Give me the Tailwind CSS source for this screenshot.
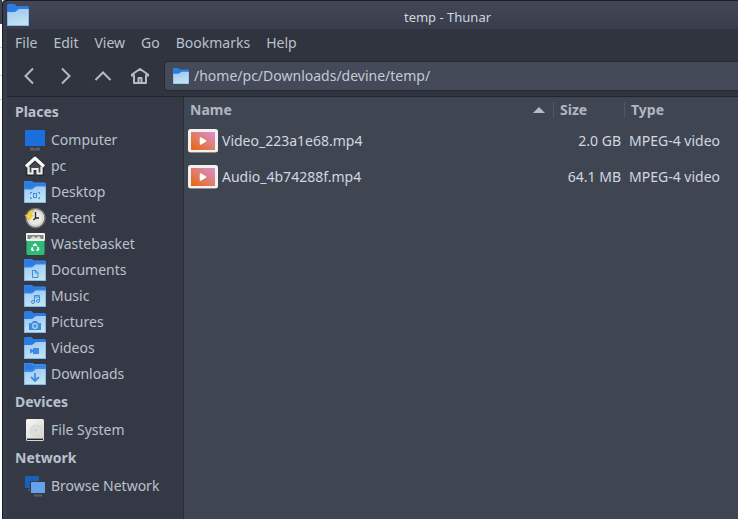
<!DOCTYPE html>
<html lang="en">
<head>
  <meta charset="UTF-8" />
  <meta name="viewport" content="width=device-width, initial-scale=1.0" />
  <title>temp - Thunar</title>
  <script src="https://cdn.jsdelivr.net/npm/@tailwindcss/browser@4"></script>
</head>
<body class="bg-white font-['Noto_Sans',sans-serif] text-sm text-[#b9c1cd] h-screen overflow-hidden flex">

  <!-- shared icons -->
  <svg class="absolute w-0 h-0" aria-hidden="true">
    <defs>
      <linearGradient id="paper" x1="0" y1="0" x2="0.3" y2="1">
        <stop offset="0" stop-color="#9cc6f5" />
        <stop offset="1" stop-color="#c2e4ee" />
      </linearGradient>
      <linearGradient id="film" x1="0" y1="1" x2="1" y2="0">
        <stop offset="0" stop-color="#ea6310" />
        <stop offset="0.45" stop-color="#e17b60" />
        <stop offset="1" stop-color="#da8edb" />
      </linearGradient>
      <linearGradient id="disk" x1="0" y1="0" x2="1" y2="1">
        <stop offset="0" stop-color="#fafafa" />
        <stop offset="1" stop-color="#d2d2ce" />
      </linearGradient>
    </defs>
    <symbol id="folder" viewBox="0 0 22 22">
      <path d="M0 1.500 Q0 0 1.500 0 H7.500 L9.500 2 H20.500 Q22 2 22 3.500 V20 H0Z" fill="#2b7ce0" />
      <path d="M0 9 Q0 8 1 8 H7 Q8.500 8 9.500 7 L11 5.500 Q11.500 5 12.500 5 H21 Q22 5 22 6 V21 Q22 22 21 22 H1 Q0 22 0 21Z" fill="url(#paper)" />
      <path d="M0.500 9 V21.500 H21.500 V6" fill="none" stroke="#86b9f0" stroke-width="1" />
    </symbol>
    <symbol id="video" viewBox="0 0 30 24">
      <rect x="0" y="0.500" width="30" height="23.500" rx="2.500" fill="#252932" />
      <rect x="0" y="0" width="30" height="23.500" rx="2.500" fill="#f4f1ee" />
      <rect x="3" y="3" width="24" height="18" fill="url(#film)" />
      <path d="M12.500 9 L17.500 12 L12.500 15Z" fill="#fff" stroke="#fff" stroke-width="1.500" stroke-linejoin="round" />
    </symbol>
  </svg>

  <!-- edge of the window behind -->
  <div class="w-0.5 shrink-0 flex flex-col bg-white">
    <div class="h-6 bg-[#3d4350]"></div>
    <div class="h-6 border-b border-[#d0d0d0]"></div>
    <div class="h-7 border-b border-[#d0d0d0]"></div>
    <div class="h-6 border-b border-[#d0d0d0]"></div>
  </div>

  <div class="flex-1 min-w-0 flex flex-col bg-[#393d4b] border-l border-t border-[#1c1e26] rounded-tl pl-1">
    <header class="h-7 shrink-0 flex items-center bg-linear-to-b from-[#434756] to-[#393d4b]">
      <svg class="size-[22px]"><use href="#folder" /></svg>
      <h1 class="flex-1 text-center pt-1 pl-32 text-[13px] text-[#cfd6e0]">temp - Thunar</h1>
    </header>

    <nav class="h-7 shrink-0 flex items-center gap-4 px-2 bg-[#2f343f]">
      <button>File</button>
      <button>Edit</button>
      <button>View</button>
      <button>Go</button>
      <button>Bookmarks</button>
      <button>Help</button>
    </nav>

    <div class="h-10 shrink-0 flex items-center pl-[3px] pb-0.5 bg-[#2f343f] border-b border-[#22252e]">
      <div class="flex text-[#b3bbc7]">
        <button aria-label="Back" class="w-[37px] flex justify-center"><svg class="size-5" viewBox="0 0 20 20" fill="none" stroke="currentColor" stroke-width="2"><path d="M14 2.500 L6.500 10 L14 17.500" /></svg></button>
        <button aria-label="Forward" class="w-[37px] flex justify-center"><svg class="size-5" viewBox="0 0 20 20" fill="none" stroke="currentColor" stroke-width="2"><path d="M6 2.500 L13.500 10 L6 17.500" /></svg></button>
        <button aria-label="Up" class="w-[37px] flex justify-center"><svg class="size-5" viewBox="0 0 20 20" fill="none" stroke="currentColor" stroke-width="2"><path d="M2.500 14 L10 6.500 L17.500 14" /></svg></button>
        <button aria-label="Home" class="w-[37px] flex justify-center"><svg class="size-5" viewBox="0 0 20 20" fill="none" stroke="currentColor" stroke-width="2" stroke-linejoin="round"><path d="M2 10.500 V8.500 L10 3 L18 8.500 V10.500 M4 8.500 V17 H16 V8.500" /><path d="M8.500 17 V12 H11.500 V17" /></svg></button>
      </div>
      <label class="ml-1.5 flex-1 h-[30px] flex items-center bg-[#444a58] border border-r-0 border-[#262a34] rounded-l pl-2">
        <svg class="size-4 shrink-0"><use href="#folder" /></svg>
        <input type="text" aria-label="Location" value="/home/pc/Downloads/devine/temp/" class="ml-[5px] flex-1 min-w-0 bg-transparent outline-none text-[#c3cbd7]" />
      </label>
    </div>

    <div class="flex-1 min-h-0 flex">
      <aside class="w-[177px] shrink-0 bg-[#353945] border-r border-[#2a2e38]">
        <h2 class="h-[30px] px-2 flex items-center font-bold">Places</h2>
        <ul>
          <li><a href="#" class="h-[26px] pl-[17px] flex items-center gap-[5px]">
            <svg class="size-[22px]" viewBox="0 0 22 22"><rect x="1" y="1" width="20" height="16" rx="0.500" fill="#1b6fdc" /><path d="M6 18.500 H9.500 L11 19.500 L12.500 18.500 H16 V21.500 H6Z" fill="#5a5d66" /></svg>
            Computer</a></li>
          <li><a href="#" class="h-[26px] pl-[17px] flex items-center gap-[5px]">
            <svg class="size-[22px]" viewBox="0 0 22 22"><path d="M3 11 L11 4 L19 11 V20 H13 V15 H9 V20 H3Z" fill="#454a52" stroke="#25282f" stroke-width="2" stroke-linejoin="round" /><path d="M2 12 L11 3.500 L20 12" fill="none" stroke="#25282f" stroke-width="4.500" /><path d="M4.500 11.500 V18.500 H8.500 V14 H13.500 V18.500 H17.500 V11.500" fill="none" stroke="#f0f0ea" stroke-width="2.200" /><path d="M2 11.500 L11 3.200 L20 11.500" fill="none" stroke="#fbfbf7" stroke-width="3.200" stroke-linejoin="round" /></svg>
            pc</a></li>
          <li><a href="#" class="h-[26px] pl-[17px] flex items-center gap-[5px]">
            <svg class="size-[22px]" viewBox="0 0 22 22" fill="none" stroke="#3f8ae4"><use href="#folder" /><path d="M6.500 13 V11.500 H8 M14 11.500 H15.500 V13 M15.500 16 V17.500 H14 M8 17.500 H6.500 V16" /><rect x="9.500" y="12.500" width="3" height="4" /></svg>
            Desktop</a></li>
          <li><a href="#" class="h-[26px] pl-[17px] flex items-center gap-[5px]">
            <svg class="size-[22px]" viewBox="0 0 22 22"><circle cx="11.500" cy="11" r="9.500" fill="#e9e9e3" stroke="#77776f" stroke-width="1.500" /><circle cx="11.500" cy="11" r="7.500" fill="none" stroke="#c9c9c1" /><path d="M11.500 5 V11 H15 M11.500 11 L9.500 13" fill="none" stroke="#22252b" stroke-width="1.300" /><path d="M8.500 3 Q4 4 3.500 8 H0.800 L5 13 L9 8.500 H6.500 Q7 6 9.500 5Z" fill="#f3d63c" stroke="#c9a31a" stroke-width="0.600" /></svg>
            Recent</a></li>
          <li><a href="#" class="h-[26px] pl-[17px] flex items-center gap-[5px]">
            <svg class="size-[22px]" viewBox="0 0 22 22"><rect x="2" y="0" width="19" height="8" rx="1" fill="#efefec" /><path d="M3.500 2 H19.500 V6 H3.500Z" fill="#858582" /><path d="M6 6 L9 3 L12 5 L15 3 L17 6Z" fill="#deded9" /><path d="M2.500 8 H20.500 V20.500 Q20.500 22 19 22 H4 Q2.500 22 2.500 20.500Z" fill="#2dbb77" /><path d="M9.300 13 L11 11.200 L12.800 13 M13.800 14 L14.500 16.500 L12.500 17.500 M10 17.500 L7.800 16.700 L8.500 14.300" fill="none" stroke="#fff" stroke-width="1.700" /></svg>
            Wastebasket</a></li>
          <li><a href="#" class="h-[26px] pl-[17px] flex items-center gap-[5px]">
            <svg class="size-[22px]" viewBox="0 0 22 22" fill="none" stroke="#3f8ae4"><use href="#folder" /><path d="M8.500 11.500 H12 L14 13.500 V18.500 H8.500Z M11.500 11.500 V14 H14" /></svg>
            Documents</a></li>
          <li><a href="#" class="h-[26px] pl-[17px] flex items-center gap-[5px]">
            <svg class="size-[22px]" viewBox="0 0 22 22" fill="none" stroke="#3f8ae4"><use href="#folder" /><path d="M10.500 17 V10.500 H15.500 V16 M10.500 12 H15.500" /><circle cx="9" cy="17" r="1.500" /><circle cx="14" cy="16" r="1.500" /></svg>
            Music</a></li>
          <li><a href="#" class="h-[26px] pl-[17px] flex items-center gap-[5px]">
            <svg class="size-[22px]" viewBox="0 0 22 22" fill="none"><use href="#folder" /><path d="M5 12 H8 L9 10 H13 L14 12 H17 V19 H5Z" fill="#3f8ae4" /><circle cx="11" cy="15" r="2.300" stroke="#b5dbf3" stroke-width="1.200" /></svg>
            Pictures</a></li>
          <li><a href="#" class="h-[26px] pl-[17px] flex items-center gap-[5px]">
            <svg class="size-[22px]" viewBox="0 0 22 22" fill="#3f8ae4"><use href="#folder" /><path d="M9 11 H15 V17 H9 V15 L6 16.500 V11.500 L9 13Z" /></svg>
            Videos</a></li>
          <li><a href="#" class="h-[26px] pl-[17px] flex items-center gap-[5px]">
            <svg class="size-[22px]" viewBox="0 0 22 22" fill="none" stroke="#3f8ae4" stroke-width="1.800"><use href="#folder" /><path d="M11 10 V18 M7 14 L11 18 L15 14" /></svg>
            Downloads</a></li>
        </ul>
        <h2 class="h-[30px] px-2 flex items-center font-bold">Devices</h2>
        <ul>
          <li><a href="#" class="h-[26px] pl-[17px] flex items-center gap-[5px]">
            <svg class="size-[22px]" viewBox="0 0 22 22"><rect x="2" y="0.500" width="18" height="21.500" rx="1.500" fill="#d6d6d2" /><rect x="2" y="0" width="18" height="19.500" rx="1.500" fill="url(#disk)" /><circle cx="12" cy="11.500" r="5.500" fill="#dedede" stroke="#cbcbc7" stroke-width="0.600" /><circle cx="12" cy="11.500" r="1" fill="#c6c6c2" /><path d="M3 20.300 H19" stroke="#262626" stroke-width="1.400" /></svg>
            File System</a></li>
        </ul>
        <h2 class="h-[30px] px-2 flex items-center font-bold">Network</h2>
        <ul>
          <li><a href="#" class="h-[26px] pl-[17px] flex items-center gap-[5px]">
            <svg class="size-[22px]" viewBox="0 0 22 22"><rect x="1" y="1" width="14" height="12" fill="#1b5fb8" /><rect x="4" y="14" width="3" height="2" fill="#555861" /><rect x="6" y="6" width="16" height="13" fill="#353945" /><rect x="7" y="7" width="14" height="11" fill="#64a2ec" /><path d="M10 19.500 H18 V21.500 H10Z" fill="#5a5d66" /></svg>
            Browse Network</a></li>
        </ul>
      </aside>

      <main class="flex-1 min-w-0 bg-[#404651]">
        <table class="w-full table-fixed border-collapse">
          <thead>
            <tr class="h-[26px] text-left text-[#b0b7c2]">
              <th class="p-0 pl-1.5 font-bold">
                <div class="flex items-center justify-between pr-2">Name
                  <svg class="w-3 h-1.5" viewBox="0 0 12 6"><path d="M0 6 L6 0 L12 6Z" fill="#b3bbc7" /></svg>
                </div>
              </th>
              <th class="w-[71px] p-0 font-bold"><div class="h-4 flex items-center pl-1.5 border-l border-[#52565f]">Size</div></th>
              <th class="w-[114px] p-0 font-bold"><div class="h-4 flex items-center pl-1.5 border-l border-[#52565f]">Type</div></th>
            </tr>
          </thead>
          <tbody class="text-[#d0d7e1]">
            <tr class="h-9">
              <td class="p-0 pl-1"><div class="flex items-center gap-1"><svg class="w-[30px] h-6"><use href="#video" /></svg>Video_223a1e68.mp4</div></td>
              <td class="p-0 pr-[3px] text-right">2.0 GB</td>
              <td class="p-0 pl-[5px]">MPEG-4 video</td>
            </tr>
            <tr class="h-9">
              <td class="p-0 pl-1"><div class="flex items-center gap-1"><svg class="w-[30px] h-6"><use href="#video" /></svg>Audio_4b74288f.mp4</div></td>
              <td class="p-0 pr-[3px] text-right">64.1 MB</td>
              <td class="p-0 pl-[5px]">MPEG-4 video</td>
            </tr>
          </tbody>
        </table>
      </main>
    </div>
  </div>
</body>
</html>
